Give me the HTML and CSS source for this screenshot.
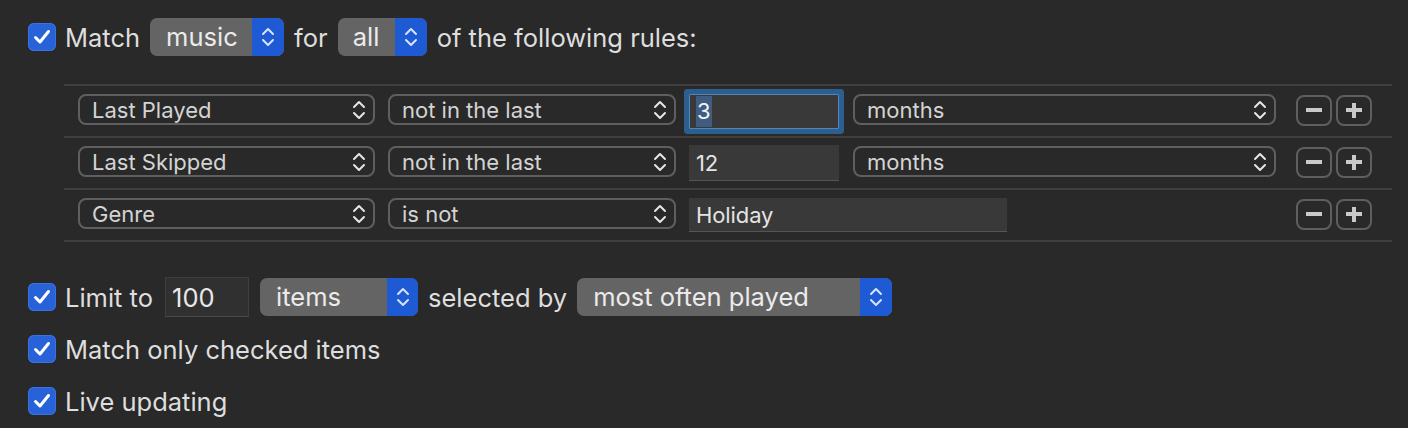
FILE: index.html
```html
<!DOCTYPE html>
<html>
<head>
<meta charset="utf-8">
<link rel="stylesheet" href="styles.css">
</head>
<body>
<div class="panel">
  <div class="line head">
    <span class="check"><svg viewBox="0 0 28 28" width="28" height="28"><path d="M7.5 14.5 L12 19 L20.5 8.5" fill="none" stroke="#fff" stroke-width="3" stroke-linecap="round" stroke-linejoin="round"/></svg></span>
    <span class="label">Match</span>
    <span class="bpop w-music"><span class="btxt">music</span><span class="bstep"><svg viewBox="0 0 14 24" width="14" height="24"><path d="M2 9 L7 4 L12 9 M2 15 L7 20 L12 15" fill="none" stroke="#d6e4ff" stroke-width="2" stroke-linecap="round" stroke-linejoin="round"/></svg></span></span>
    <span class="label after">for</span>
    <span class="bpop w-all"><span class="btxt">all</span><span class="bstep"><svg viewBox="0 0 14 24" width="14" height="24"><path d="M2 9 L7 4 L12 9 M2 15 L7 20 L12 15" fill="none" stroke="#d6e4ff" stroke-width="2" stroke-linecap="round" stroke-linejoin="round"/></svg></span></span>
    <span class="label after">of the following rules:</span>
  </div>

  <div class="rules">
    <div class="rule">
      <span class="pop w-field"><span>Last Played</span><svg viewBox="0 0 14 24" width="14" height="24"><path d="M2 9 L7 4 L12 9 M2 15 L7 20 L12 15" fill="none" stroke="#e6e6e6" stroke-width="2" stroke-linecap="round" stroke-linejoin="round"/></svg></span>
      <span class="pop w-op"><span>not in the last</span><svg viewBox="0 0 14 24" width="14" height="24"><path d="M2 9 L7 4 L12 9 M2 15 L7 20 L12 15" fill="none" stroke="#e6e6e6" stroke-width="2" stroke-linecap="round" stroke-linejoin="round"/></svg></span>
      <span class="field w-num focus"><span class="sel">3</span></span>
      <span class="pop w-unit"><span>months</span><svg viewBox="0 0 14 24" width="14" height="24"><path d="M2 9 L7 4 L12 9 M2 15 L7 20 L12 15" fill="none" stroke="#e6e6e6" stroke-width="2" stroke-linecap="round" stroke-linejoin="round"/></svg></span>
      <span class="btns"><span class="btn"><i class="minus"></i></span><span class="btn"><i class="minus"></i><i class="vbar"></i></span></span>
    </div>
    <div class="rule">
      <span class="pop w-field"><span>Last Skipped</span><svg viewBox="0 0 14 24" width="14" height="24"><path d="M2 9 L7 4 L12 9 M2 15 L7 20 L12 15" fill="none" stroke="#e6e6e6" stroke-width="2" stroke-linecap="round" stroke-linejoin="round"/></svg></span>
      <span class="pop w-op"><span>not in the last</span><svg viewBox="0 0 14 24" width="14" height="24"><path d="M2 9 L7 4 L12 9 M2 15 L7 20 L12 15" fill="none" stroke="#e6e6e6" stroke-width="2" stroke-linecap="round" stroke-linejoin="round"/></svg></span>
      <span class="field w-num">12</span>
      <span class="pop w-unit"><span>months</span><svg viewBox="0 0 14 24" width="14" height="24"><path d="M2 9 L7 4 L12 9 M2 15 L7 20 L12 15" fill="none" stroke="#e6e6e6" stroke-width="2" stroke-linecap="round" stroke-linejoin="round"/></svg></span>
      <span class="btns"><span class="btn"><i class="minus"></i></span><span class="btn"><i class="minus"></i><i class="vbar"></i></span></span>
    </div>
    <div class="rule">
      <span class="pop w-field"><span>Genre</span><svg viewBox="0 0 14 24" width="14" height="24"><path d="M2 9 L7 4 L12 9 M2 15 L7 20 L12 15" fill="none" stroke="#e6e6e6" stroke-width="2" stroke-linecap="round" stroke-linejoin="round"/></svg></span>
      <span class="pop w-op"><span>is not</span><svg viewBox="0 0 14 24" width="14" height="24"><path d="M2 9 L7 4 L12 9 M2 15 L7 20 L12 15" fill="none" stroke="#e6e6e6" stroke-width="2" stroke-linecap="round" stroke-linejoin="round"/></svg></span>
      <span class="field w-text">Holiday</span>
      <span class="btns"><span class="btn"><i class="minus"></i></span><span class="btn"><i class="minus"></i><i class="vbar"></i></span></span>
    </div>
  </div>

  <div class="options">
    <div class="line">
      <span class="check"><svg viewBox="0 0 28 28" width="28" height="28"><path d="M7.5 14.5 L12 19 L20.5 8.5" fill="none" stroke="#fff" stroke-width="3" stroke-linecap="round" stroke-linejoin="round"/></svg></span>
      <span class="label">Limit to</span>
      <span class="limit">100</span>
      <span class="bpop w-items"><span class="btxt">items</span><span class="bstep"><svg viewBox="0 0 14 24" width="14" height="24"><path d="M2 9 L7 4 L12 9 M2 15 L7 20 L12 15" fill="none" stroke="#d6e4ff" stroke-width="2" stroke-linecap="round" stroke-linejoin="round"/></svg></span></span>
      <span class="label after">selected by</span>
      <span class="bpop w-most"><span class="btxt">most often played</span><span class="bstep"><svg viewBox="0 0 14 24" width="14" height="24"><path d="M2 9 L7 4 L12 9 M2 15 L7 20 L12 15" fill="none" stroke="#d6e4ff" stroke-width="2" stroke-linecap="round" stroke-linejoin="round"/></svg></span></span>
    </div>
    <div class="line">
      <span class="check"><svg viewBox="0 0 28 28" width="28" height="28"><path d="M7.5 14.5 L12 19 L20.5 8.5" fill="none" stroke="#fff" stroke-width="3" stroke-linecap="round" stroke-linejoin="round"/></svg></span>
      <span class="label">Match only checked items</span>
    </div>
    <div class="line">
      <span class="check"><svg viewBox="0 0 28 28" width="28" height="28"><path d="M7.5 14.5 L12 19 L20.5 8.5" fill="none" stroke="#fff" stroke-width="3" stroke-linecap="round" stroke-linejoin="round"/></svg></span>
      <span class="label">Live updating</span>
    </div>
  </div>
</div>
</body>
</html>
```

FILE: styles.css
```css
html, body {
  margin: 0;
  padding: 0;
  background: #292929;
  height: 100%;
}
body {
  font-family: "Inter", "Roboto", "Liberation Sans", sans-serif;
  color: #dedede;
  overflow: hidden;
}
.panel {
  padding: 11px 0 0 28px;
}
.line {
  display: flex;
  align-items: center;
  height: 52px;
}
.check {
  width: 28px;
  height: 28px;
  border-radius: 6px;
  background: #2762d8;
  box-shadow: inset 0 0 0 1px #3a72e0;
  display: block;
  flex: none;
}
.check svg { display: block; }
.label {
  font-size: 25.5px;
  margin-left: 9px;
  margin-right: 10px;
  white-space: nowrap;
  letter-spacing: 0;
}
.label.after { margin-left: 10px; }
.bpop {
  display: flex;
  height: 38px;
  border-radius: 7px;
  overflow: hidden;
  background: #646464;
  flex: none;
}
.btxt {
  flex: 1;
  font-size: 25.5px;
  letter-spacing: 0;
  color: #ebebeb;
  padding-left: 16px;
  line-height: 38px;
  white-space: nowrap;
}
.bstep {
  width: 32px;
  background: #1f5ad5;
  display: flex;
  align-items: center;
  justify-content: center;
}
.bstep svg { display: block; }
.w-music { width: 134px; }
.w-all { width: 89px; }
.w-all .btxt { padding-left: 15px; }
.w-items { width: 158px; margin-left: 11px; }
.w-items .bstep { width: 31px; }
.w-most { width: 315px; }

.rules {
  margin: 21px 16px 0 36px;
  border-top: 2px solid #3f3f3f;
}
.rule {
  display: flex;
  align-items: center;
  height: 50px;
  border-bottom: 2px solid #3f3f3f;
  padding: 0 20px 0 14px;
}
.pop {
  display: flex;
  align-items: center;
  justify-content: space-between;
  box-sizing: border-box;
  height: 31px;
  border: 2px solid #5f5f5f;
  border-radius: 8px;
  padding: 0 7px 0 12px;
  font-size: 22px;
  letter-spacing: 0;
  color: #d4d4d4;
  margin-top: -3px;
  flex: none;
  white-space: nowrap;
}
.pop svg { display: block; }
.w-field { width: 297px; margin-right: 13px; }
.w-op { width: 288px; margin-right: 13px; }
.w-unit { width: 423px; margin-left: 14px; }
.field {
  box-sizing: border-box;
  height: 36px;
  background: #393939;
  border-bottom: 1px solid #555;
  font-size: 22px;
  letter-spacing: -0.1px;
  color: #e4e4e4;
  padding: 0 7px;
  display: flex;
  align-items: center;
  flex: none;
}
.w-num { width: 150px; }
.w-text { width: 318px; height: 34px; }
.field.focus {
  height: 35px;
  border: 1px solid #4f88b8;
  box-shadow: 0 0 0 5px #2c5f8f;
  border-radius: 1px;
  padding-left: 6px;
}
.sel {
  background: #3e5d80;
  color: #f4f4f4;
  padding: 2px 1px;
  line-height: 27px;
}
.btns {
  display: flex;
  gap: 4px;
  margin-left: auto;
  margin-top: -2px;
}
.btn {
  position: relative;
  box-sizing: border-box;
  width: 36px;
  height: 31px;
  border: 2px solid #5f5f5f;
  border-radius: 8px;
}
.btn i {
  position: absolute;
  background: #c9c9c9;
  display: block;
}
.btn .minus {
  left: 8px;
  top: 11.5px;
  width: 16px;
  height: 4px;
}
.btn .vbar {
  left: 14px;
  top: 6px;
  width: 4px;
  height: 15px;
}

.options {
  margin-top: 29px;
}
.limit {
  box-sizing: border-box;
  width: 84px;
  height: 40px;
  background: #303030;
  border: 1px solid #3e3e3e;
  border-bottom-color: #4a4a4a;
  font-size: 25.5px;
  letter-spacing: 0;
  color: #e8e8e8;
  padding-left: 6px;
  display: flex;
  align-items: center;
  margin-left: 2px;
  flex: none;
}
```
